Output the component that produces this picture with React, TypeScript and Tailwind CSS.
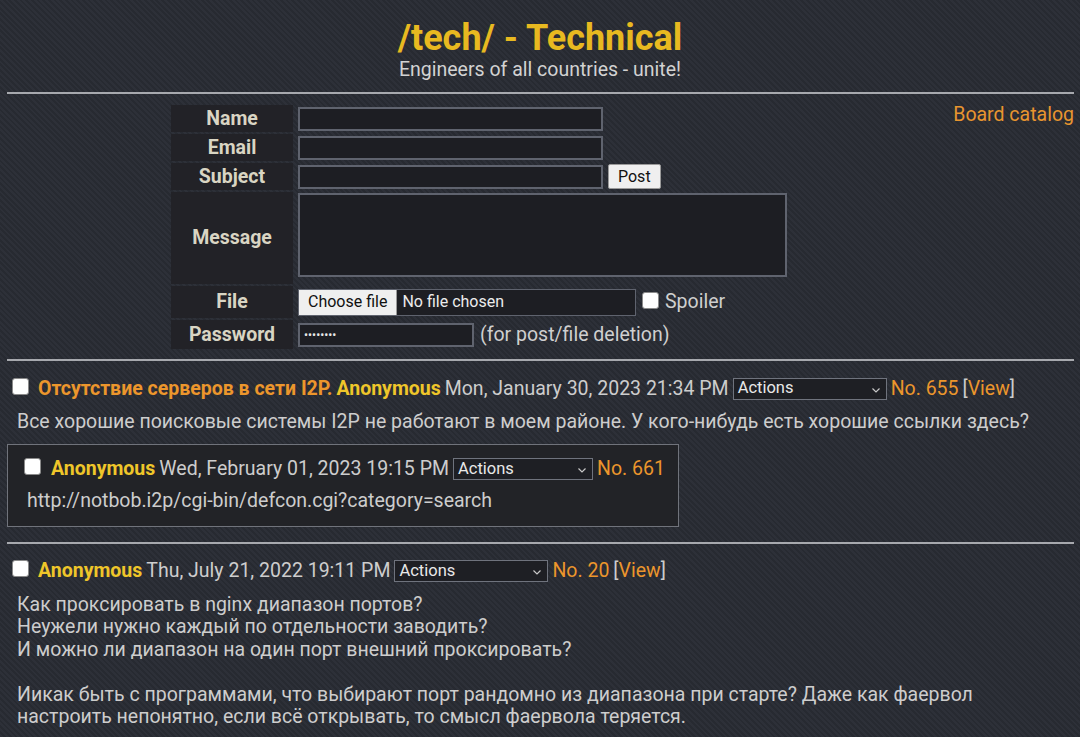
import React from 'react';

const stripes =
  'bg-[image:repeating-linear-gradient(45deg,#2d3038_0px,#2d3038_2px,#272a31_2px,#272a31_4px)]';

const Checkbox: React.FC<{ className?: string }> = ({ className = '' }) => (
  <input
    type="checkbox"
    className={`appearance-none w-[17px] h-[17px] bg-white rounded-[3px] border border-[#8a8a8a] shrink-0 ${className}`}
  />
);

const ActionsSelect: React.FC<{ width: string }> = ({ width }) => (
  <span
    className={`relative inline-flex items-center h-[22px] ${width} bg-[#1e1f24] border border-[#6f737d] text-[#e8e8e8] text-[16.5px] pl-[4px] align-middle`}
  >
    Actions
    <svg
      className="absolute right-[5px] top-[6px]"
      width="10"
      height="10"
      viewBox="0 0 10 10"
      fill="none"
      stroke="#c8c8c8"
      strokeWidth="1.2"
    >
      <path d="M1.5 3.5 L5 7 L8.5 3.5" />
    </svg>
  </span>
);

const Rule: React.FC<{ className?: string }> = ({ className = '' }) => (
  <div className={`h-[2px] bg-[#a7a9ae] ${className}`} />
);

const labelCell =
  'bg-[#222227] text-center font-bold text-[19.5px] leading-[22px] text-[#d9d5c3] px-[8px]';
const textInput = 'block h-[24px] bg-[#1d1e23] border-2 border-[#5f636e]';

const PostForm: React.FC = () => (
  <table className="border-separate border-spacing-x-[3px] border-spacing-y-[2px] ml-[162px] mt-[9px] leading-[22px]">
    <tbody>
      <tr className="h-[27px]">
        <td className={`${labelCell} w-[122px]`}>Name</td>
        <td className="pl-[2px]">
          <div className={`${textInput} w-[305px]`} />
        </td>
      </tr>
      <tr className="h-[27px]">
        <td className={labelCell}>Email</td>
        <td className="pl-[2px]">
          <div className={`${textInput} w-[305px]`} />
        </td>
      </tr>
      <tr className="h-[27px]">
        <td className={labelCell}>Subject</td>
        <td className="pl-[2px]">
          <div className="flex items-center gap-[5px]">
            <div className={`${textInput} w-[305px]`} />
            <button className="h-[25px] px-[9px] bg-[#efefef] border border-[#9a9a9a] rounded-[2px] text-[16px] text-[#111] leading-none">
              Post
            </button>
          </div>
        </td>
      </tr>
      <tr className="h-[92px]">
        <td className={labelCell}>Message</td>
        <td className="pl-[2px] align-top pt-[1px]">
          <div className="w-[489px] h-[84px] bg-[#1d1e23] border-2 border-[#5f636e]" />
        </td>
      </tr>
      <tr className="h-[32px]">
        <td className={labelCell}>File</td>
        <td className="pl-[2px]">
          <div className="flex items-center gap-[6px]">
            <div className="flex items-center w-[338px] h-[27px] bg-[#1d1e23] border border-[#5f636e] text-[16px]">
              <span className="h-full flex items-center px-[9px] bg-[#efefef] text-[#111] border-r border-[#9a9a9a]">
                Choose file
              </span>
              <span className="pl-[5px] text-[#ececec]">No file chosen</span>
            </div>
            <Checkbox className="-mt-[3px]" />
            <span className="text-[19.5px] text-[#cfcfcf]">Spoiler</span>
          </div>
        </td>
      </tr>
      <tr className="h-[29px]">
        <td className={labelCell}>Password</td>
        <td className="pl-[2px]">
          <div className="flex items-center gap-[6px]">
            <div className={`${textInput} w-[176px] flex items-center pl-[4px] text-[12px] text-[#e8e8e8]`}>
              ••••••••
            </div>
            <span className="text-[19.5px] text-[#cfcfcf]">(for post/file deletion)</span>
          </div>
        </td>
      </tr>
    </tbody>
  </table>
);

const App: React.FC = () => {
  return (
    <div
      className={`min-h-screen w-full ${stripes} font-[family-name:Roboto,sans-serif] text-[#cdcdcd] text-[19.5px] px-[6px] pb-6`}
    >
      <header className="text-center pt-[16px]">
        <h1 className="text-[36px] font-bold leading-[44px] text-[#e8b920]">/tech/ - Technical</h1>
        <p className="text-[19.5px] leading-[22px] text-[#d2d2d2] -mt-[1px]">Engineers of all countries - unite!</p>
      </header>
      <Rule className="mt-[11px] ml-[1px]" />

      <div className="flex items-start justify-between">
        <PostForm />
        <a className="mt-[6px] text-[#e8952f] text-[19.5px]">Board catalog</a>
      </div>

      <Rule className="mt-[8px] ml-[1px]" />

      {/* thread 655 */}
      <div className="mt-[13px]">
        <div className="flex items-center gap-[4px] pl-[6px] whitespace-nowrap">
          <Checkbox className="-mt-[4px] mr-[5px]" />
          <span className="font-bold text-[#ec962c]">Отсутствие серверов в сети I2P.</span>
          <span className="font-bold text-[#efc62a]">Anonymous</span>
          <span>Mon, January 30, 2023 21:34 PM</span>
          <ActionsSelect width="w-[154px]" />
          <span className="text-[#ec962c]">No. 655</span>
          <span>
            [<a className="text-[#ec962c]">View</a>]
          </span>
        </div>
        <p className="pl-[11px] mt-[7px] leading-[24px]">
          Все хорошие поисковые системы I2P не работают в моем районе. У кого-нибудь есть хорошие ссылки здесь?
        </p>

        <div className="mt-[10px] ml-[1px] w-[672px] h-[83px] bg-[#222327] border border-[#70737b] pl-[16px] pt-[9px]">
          <div className="flex items-center gap-[4px] whitespace-nowrap">
            <Checkbox className="-mt-[4px] mr-[6px]" />
            <span className="font-bold text-[#efc62a]">Anonymous</span>
            <span>Wed, February 01, 2023 19:15 PM</span>
            <ActionsSelect width="w-[140px]" />
            <span className="text-[#ec962c]">No. 661</span>
          </div>
          <p className="mt-[5px] pl-[3px] leading-[24px]">http://notbob.i2p/cgi-bin/defcon.cgi?category=search</p>
        </div>
      </div>

      <Rule className="mt-[15px] ml-[1px]" />

      {/* thread 20 */}
      <div className="mt-[12px]">
        <div className="flex items-center gap-[4px] pl-[6px] whitespace-nowrap">
          <Checkbox className="-mt-[4px] mr-[5px]" />
          <span className="font-bold text-[#efc62a]">Anonymous</span>
          <span>Thu, July 21, 2022 19:11 PM</span>
          <ActionsSelect width="w-[154px]" />
          <span className="text-[#ec962c]">No. 20</span>
          <span>
            [<a className="text-[#ec962c]">View</a>]
          </span>
        </div>
        <div className="pl-[11px] mt-[8px] leading-[22.5px]">
          <p>Как проксировать в nginx диапазон портов?</p>
          <p>Неужели нужно каждый по отдельности заводить?</p>
          <p>И можно ли диапазон на один порт внешний проксировать?</p>
          <p>&nbsp;</p>
          <p>
            Иикак быть с программами, что выбирают порт рандомно из диапазона при старте? Даже как фаервол
            <br />
            настроить непонятно, если всё открывать, то смысл фаервола теряется.
          </p>
        </div>
      </div>
    </div>
  );
};

export default App;
